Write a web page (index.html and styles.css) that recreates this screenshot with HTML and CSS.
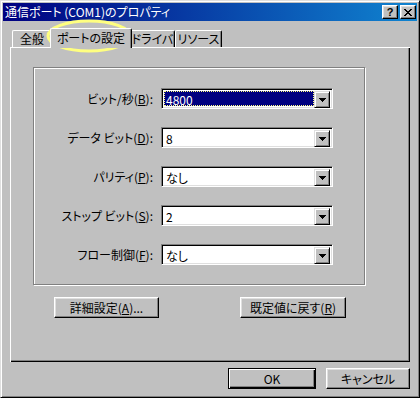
FILE: index.html
```html
<!DOCTYPE html>
<html lang="ja">
<head>
    <meta charset="UTF-8">
    <meta name="viewport" content="width=device-width, initial-scale=1.0">
    <title>通信ポート (COM1)のプロパティ</title>
    <link rel="stylesheet" href="styles.css">
</head>
<body>
    <div class="window">
        <div class="titlebar">
            <span class="title">通信ポート (COM1)のプロパティ</span>
            <div class="cap-buttons">
                <button class="cap cap-help">?</button>
                <button class="cap cap-close">
                    <svg width="8" height="7" viewBox="0 0 8 7" shape-rendering="crispEdges"><path d="M0 0h2v1H0zM6 0h2v1H6zM1 1h2v1H1zM5 1h2v1H5zM2 2h4v1H2zM3 3h2v1H3zM2 4h4v1H2zM1 5h2v1H1zM5 5h2v1H5zM0 6h2v1H0zM6 6h2v1H6z"/></svg>
                </button>
            </div>
        </div>

        <div class="tabs">
            <div class="tab tab-general">全般</div>
            <div class="tab tab-port active">ポートの設定</div>
            <div class="tab tab-driver">ドライバ</div>
            <div class="tab tab-resource">リソース</div>
        </div>

        <div class="panel">
            <div class="group">
                <div class="row">
                    <label>ビット/秒(<u>B</u>):</label>
                    <div class="combo">
                        <div class="field selected"><span>4800</span></div>
                        <div class="drop"><svg width="7" height="4" shape-rendering="crispEdges"><path d="M0 0h7v1H0zM1 1h5v1H1zM2 2h3v1H2zM3 3h1v1H3z"/></svg></div>
                    </div>
                </div>
                <div class="row">
                    <label>データ ビット(<u>D</u>):</label>
                    <div class="combo">
                        <div class="field"><span>8</span></div>
                        <div class="drop"><svg width="7" height="4" shape-rendering="crispEdges"><path d="M0 0h7v1H0zM1 1h5v1H1zM2 2h3v1H2zM3 3h1v1H3z"/></svg></div>
                    </div>
                </div>
                <div class="row">
                    <label>パリティ(<u>P</u>):</label>
                    <div class="combo">
                        <div class="field"><span>なし</span></div>
                        <div class="drop"><svg width="7" height="4" shape-rendering="crispEdges"><path d="M0 0h7v1H0zM1 1h5v1H1zM2 2h3v1H2zM3 3h1v1H3z"/></svg></div>
                    </div>
                </div>
                <div class="row">
                    <label>ストップ ビット(<u>S</u>):</label>
                    <div class="combo">
                        <div class="field"><span>2</span></div>
                        <div class="drop"><svg width="7" height="4" shape-rendering="crispEdges"><path d="M0 0h7v1H0zM1 1h5v1H1zM2 2h3v1H2zM3 3h1v1H3z"/></svg></div>
                    </div>
                </div>
                <div class="row">
                    <label>フロー制御(<u>F</u>):</label>
                    <div class="combo">
                        <div class="field"><span>なし</span></div>
                        <div class="drop"><svg width="7" height="4" shape-rendering="crispEdges"><path d="M0 0h7v1H0zM1 1h5v1H1zM2 2h3v1H2zM3 3h1v1H3z"/></svg></div>
                    </div>
                </div>
            </div>

            <div class="panel-buttons">
                <button class="btn btn-advanced">詳細設定(<u>A</u>)...</button>
                <button class="btn btn-defaults">既定値に戻す(<u>R</u>)</button>
            </div>
        </div>

        <div class="footer">
            <button class="btn btn-ok">OK</button>
            <button class="btn btn-cancel">キャンセル</button>
        </div>

        <!-- highlight drawn over the active tab -->
        <svg class="marker" width="420" height="398">
            <ellipse cx="89" cy="36" rx="41" ry="15" fill="none" stroke="#ffff80" stroke-width="3"/>
        </svg>
    </div>
</body>
</html>
```

FILE: styles.css
```css
* {
    box-sizing: border-box;
}

body {
    margin: 0;
    background-color: #c0c0c0;
    font-family: "Noto Sans CJK JP", "Liberation Sans", sans-serif;
    font-size: 12px;
    font-feature-settings: "palt";
    color: #000;
}

.window {
    position: relative;
    width: 420px;
    height: 398px;
    padding: 2px;
    background-color: #c0c0c0;
    border: 1px solid;
    border-color: #dfdfdf #000 #000 #dfdfdf;
    box-shadow: inset 1px 1px #fff, inset -1px -1px #808080;
    display: flex;
    flex-direction: column;
}

/* title bar */
.titlebar {
    height: 18px;
    padding: 0 1px 0 2px;
    display: flex;
    align-items: center;
    background: linear-gradient(to right, #000080, #1084d0);
    color: #fff;
}

.title {
    flex: 1;
    line-height: 18px;
    white-space: nowrap;
}

.cap-buttons {
    display: flex;
    gap: 2px;
}

.cap {
    width: 16px;
    height: 14px;
    padding: 0;
    display: flex;
    align-items: center;
    justify-content: center;
    background-color: #c0c0c0;
    border: 1px solid;
    border-color: #fff #000 #000 #fff;
    box-shadow: inset -1px -1px #808080, inset 1px 1px #dfdfdf;
    font-family: "Liberation Sans", sans-serif;
    font-weight: bold;
    font-size: 11px;
    line-height: 12px;
    color: #000;
}

/* tabs */
.tabs {
    height: 19px;
    margin: 7px 7px 0;
    padding-left: 2px;
    display: flex;
    align-items: flex-end;
}

.tab {
    height: 17px;
    line-height: 15px;
    text-align: center;
    white-space: nowrap;
    background-color: #c0c0c0;
    border: 1px solid;
    border-color: #fff #000 transparent #fff;
    border-bottom: none;
    border-radius: 2px 2px 0 0;
    box-shadow: inset -1px 0 #808080;
}

.tab-general { width: 40px; }
.tab-driver { width: 45px; border-left-color: transparent; }
.tab-resource { width: 47px; }

.tab.active {
    position: relative;
    z-index: 1;
    width: 82px;
    height: 20px;
    line-height: 17px;
    margin: 0 -2px -1px;
}

/* tab page */
.panel {
    height: 315px;
    margin: 0 7px;
    padding: 20px 0 0 23px;
    display: flex;
    flex-direction: column;
    box-shadow: inset 1px 1px #fff, inset -1px -1px #000, inset -2px -2px #808080;
}

.group {
    width: 332px;
    height: 218px;
    padding-top: 20px;
    border: 1px solid #808080;
    box-shadow: inset 1px 1px #fff, 1px 1px #fff;
    display: grid;
    grid-template-columns: 119px 172px;
    grid-auto-rows: 21px;
    column-gap: 8px;
    row-gap: 18px;
    align-content: start;
}

.row {
    display: contents;
}

.row label {
    text-align: right;
    line-height: 21px;
    white-space: nowrap;
}

.combo {
    display: flex;
    padding: 2px;
    background-color: #fff;
    border: 1px solid;
    border-color: #808080 #fff #fff #808080;
    box-shadow: inset 1px 1px #000, inset -1px -1px #dfdfdf;
}

.field {
    flex: 1;
    line-height: 15px;
    padding-left: 1px;
    border: 1px solid transparent;
}

.field.selected {
    background-color: #000080;
    color: #fff;
    border: 1px dotted #ffff80;
}

.drop {
    width: 16px;
    height: 17px;
    display: flex;
    align-items: center;
    justify-content: center;
    background-color: #c0c0c0;
    border: 1px solid;
    border-color: #dfdfdf #000 #000 #dfdfdf;
    box-shadow: inset 1px 1px #fff, inset -1px -1px #808080;
}

.panel-buttons {
    margin: 12px 0 0 21px;
    display: flex;
    gap: 81px;
}

/* push buttons */
.btn {
    height: 21px;
    padding: 0;
    background-color: #c0c0c0;
    border: 1px solid;
    border-color: #fff #000 #000 #fff;
    box-shadow: inset -1px -1px #808080, inset 1px 1px #dfdfdf;
    font-family: inherit;
    font-size: 12px;
    font-feature-settings: "palt";
    line-height: 17px;
    color: #000;
}

.btn-advanced { width: 105px; }
.btn-defaults { width: 106px; }

.footer {
    margin: 6px 7px 0;
    display: flex;
    justify-content: flex-end;
    gap: 10px;
}

.btn-ok {
    width: 88px;
    border-color: #000;
    box-shadow: inset 1px 1px #fff, inset -1px -1px #000, inset -2px -2px #808080;
}

.btn-cancel { width: 84px; }

.marker {
    position: absolute;
    top: -1px;
    left: -1px;
    pointer-events: none;
}
```
